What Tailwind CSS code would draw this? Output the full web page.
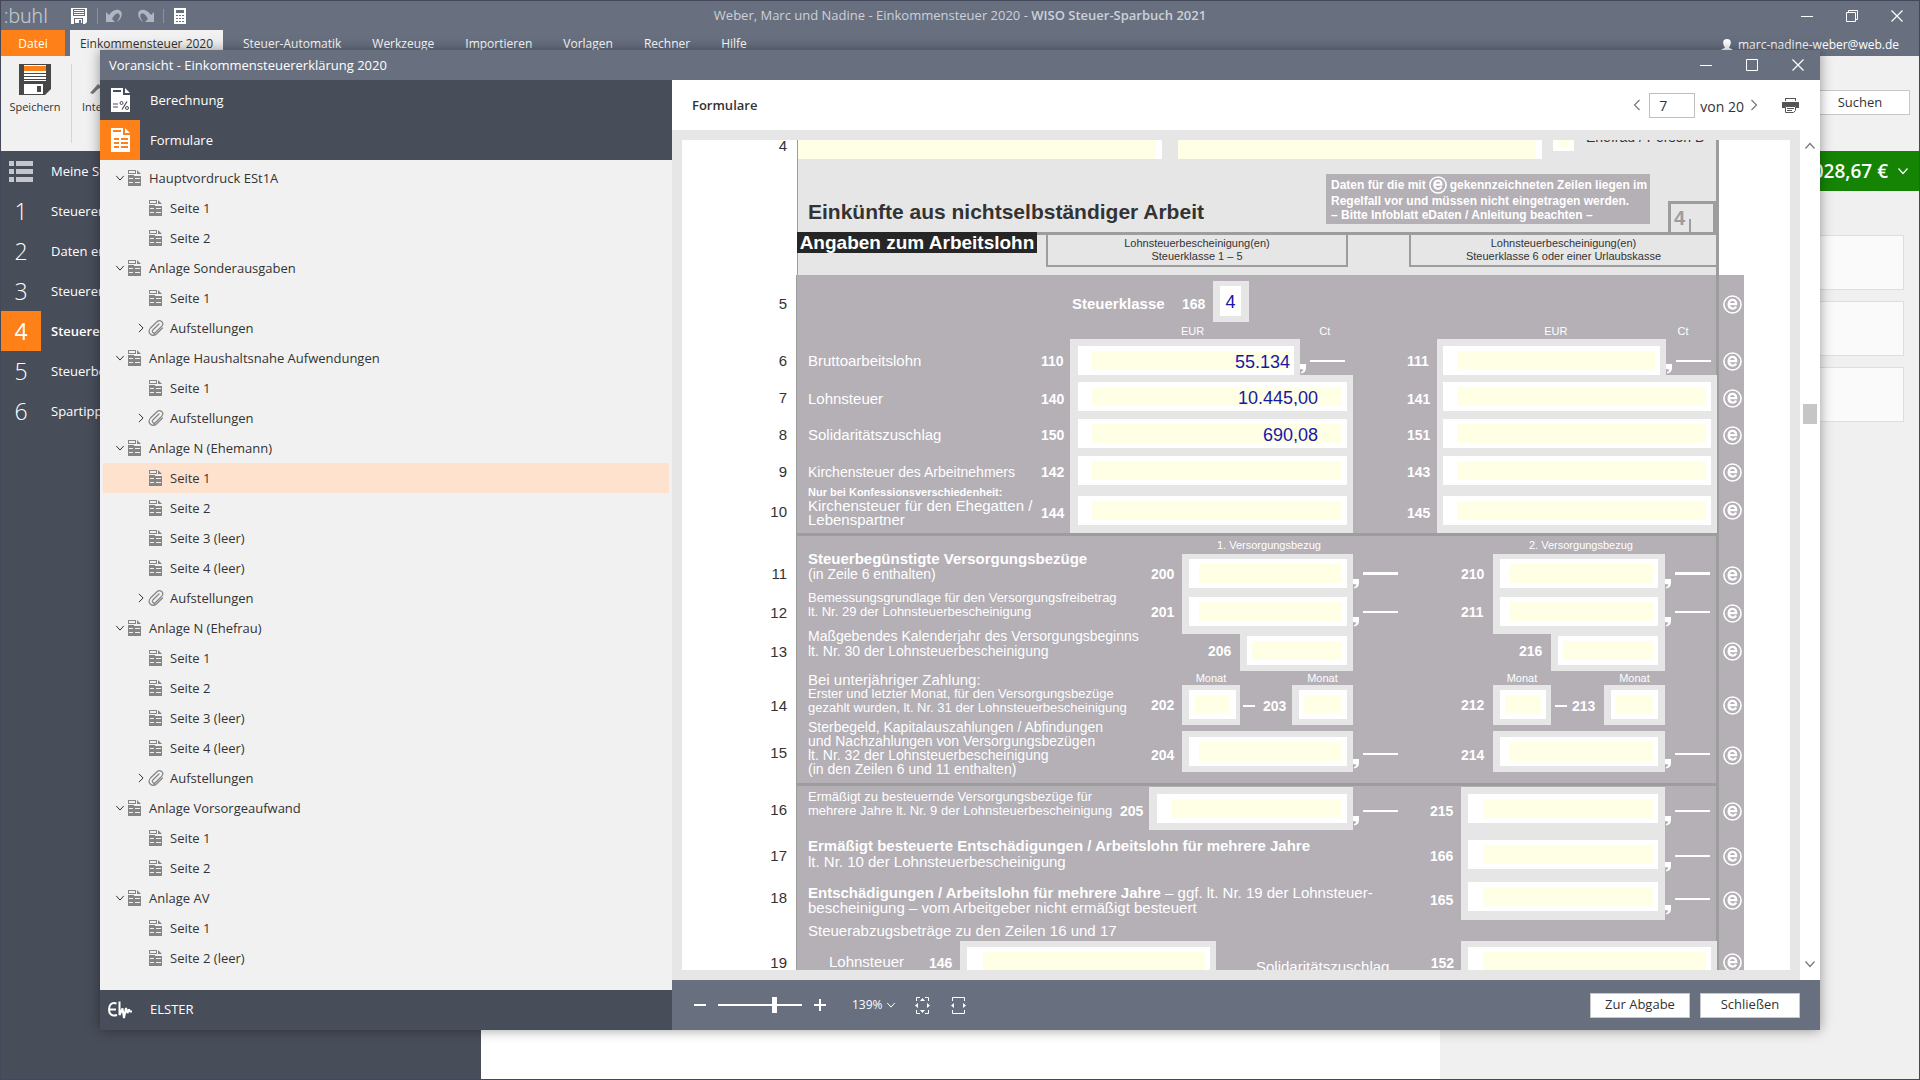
<!DOCTYPE html>
<html lang="de">
<head>
    <meta charset="UTF-8">
    <meta name="viewport" content="width=device-width, initial-scale=1.0">
    <title>WISO Steuer-Sparbuch 2021</title>
    <script src="https://cdn.jsdelivr.net/npm/@tailwindcss/browser@4"></script>
</head>
<body class="h-screen overflow-hidden relative bg-[#484d5a] font-['Open_Sans',sans-serif] text-[13px]">

    <!-- icon sprite -->
    <svg width="0" height="0" class="absolute" aria-hidden="true">
        <symbol id="i-doc" viewBox="0 0 13 16">
            <path fill="currentColor" d="M0 0h8v4H0zM9 0l4 4H9zM0 5h13v11H0z"/>
            <path fill="#f1f1f1" d="M1 1h6v2H1zM6 5h7v1H6zM1 8h4v1H1zM7 8h5v1H7zM1 12h4v1H1zM7 12h5v1H7z"/>
        </symbol>
        <symbol id="i-clip" viewBox="0 0 16 16">
            <path fill="none" stroke="currentColor" stroke-width="1.200" stroke-linecap="round" d="M14.500 8L8.500 14C4.500 17.500-1.500 13 2.500 8L9 1.800c3-2.800 7.500.7 5 4L7.800 12.300c-2 1.700-4.600-.3-3-2.300L11 4M6 14L12.500 7.500"/>
        </symbol>
        <symbol id="i-down" viewBox="0 0 12 12"><path fill="none" stroke="currentColor" stroke-width="1.200" d="M1.500 3.500L6 8.500l4.500-5"/></symbol>
        <symbol id="i-up" viewBox="0 0 12 12"><path fill="none" stroke="currentColor" stroke-width="1.200" d="M1.500 8.500L6 3.500l4.500 5"/></symbol>
        <symbol id="i-right" viewBox="0 0 12 12"><path fill="none" stroke="currentColor" stroke-width="1.200" d="M3.500 1L8.500 6l-5 5"/></symbol>
        <symbol id="i-left" viewBox="0 0 12 12"><path fill="none" stroke="currentColor" stroke-width="1.200" d="M8.500 1L3.500 6l5 5"/></symbol>
        <symbol id="i-close" viewBox="0 0 12 12"><path fill="none" stroke="currentColor" stroke-width="1.200" d="M.5.5l11 11M11.500.5l-11 11"/></symbol>
        <symbol id="i-min" viewBox="0 0 12 12"><path fill="currentColor" d="M0 6h12v1H0z"/></symbol>
        <symbol id="i-e" viewBox="0 0 20 20">
            <circle cx="10" cy="10" r="9" fill="none" stroke="#fff" stroke-width="1.700"/>
            <path fill="none" stroke="#fff" stroke-width="2.400" d="M6 9.600h7.900c0-6-7.700-6-8 .2 0 5.400 6.200 5.600 7.900 2.200"/>
        </symbol>
        <symbol id="i-comma" viewBox="0 0 6 10"><path fill="#fff" d="M0 0h6v4c0 3-1.500 5-5 5.500V8c1.500-.3 2.200-1.200 2.300-2.500L0 5z"/></symbol>
    </svg>

    <!-- main window -->
    <div class="h-full flex flex-col border border-[#43485a]">
        <header class="bg-[#687080] text-white shrink-0">
            <div class="h-[29px] flex items-center relative">
                <span class="w-[70px] pl-[3px] font-['Roboto'] font-light text-[21px] leading-[28px] text-[#c4c8d0]">:buhl</span>
                <button aria-label="Speichern" class="w-[27px] border-r border-[#8a90a0]">
                    <svg width="16" height="16" viewBox="0 0 16 16"><path fill="#fff" d="M0 0h16v14l-2 2H0z"/><path fill="#687080" d="M2 1h12v7H2zM3 10h9v6H3z"/><path fill="#fff" d="M3 2h10v1H3zM3 4h10v1H3zM3 6h10v1H3zM4 11h7v4H4z"/><path fill="#687080" d="M8 12h2v3H8z"/></svg>
                </button>
                <button aria-label="Rückgängig" class="w-[32px] pl-2"><svg width="16" height="14" viewBox="0 0 16 14"><path fill="#b0b5c2" d="M0 3v10h9L6 10c2-4 5-7 7-5 2 1.500 0 5-2 8 4-3 5.500-7 4.500-9.500C14-1 7 0 3 6z"/></svg></button>
                <button aria-label="Wiederholen" class="w-[34px] pl-2 border-r border-[#8a90a0]"><svg width="16" height="14" viewBox="0 0 16 14"><path fill="#b0b5c2" d="M16 3v10H7l3-3C8 6 5 3 3 5c-2 1.500 0 5 2 8C1 10-.5 6 .5 3.500 2-1 9 0 13 6z"/></svg></button>
                <button aria-label="Taschenrechner" class="pl-[10px]"><svg width="12" height="16" viewBox="0 0 12 16"><path fill="#fff" d="M0 0h12v16H0z"/><path fill="#687080" d="M2 2h8v3H2zM2 7h2v1H2zM5 7h2v1H5zM8 7h2v1H8zM2 10h2v1H2zM5 10h2v1H5zM8 10h2v1H8zM2 13h2v1H2zM5 13h2v1H5zM8 13h2v1H8z"/></svg></button>
                <h1 class="absolute inset-x-0 top-[4px] text-center text-[13px] leading-5 text-[#cdd1d9] pointer-events-none">Weber, Marc und Nadine - Einkommensteuer 2020 - <span class="font-semibold">WISO Steuer-Sparbuch 2021</span></h1>
                <div class="ml-auto pr-4 flex gap-[33px]">
                    <button aria-label="Minimieren"><svg width="12" height="12"><use href="#i-min"/></svg></button>
                    <button aria-label="Wiederherstellen"><svg width="12" height="12" viewBox="0 0 12 12"><path fill="none" stroke="#fff" d="M.5 2.500h9v9h-9zM2.500 2.500v-2h9v9h-2"/></svg></button>
                    <button aria-label="Schließen"><svg width="12" height="12"><use href="#i-close"/></svg></button>
                </div>
            </div>
            <nav class="h-[26px] flex items-center text-[12px] leading-[24px]">
                <button class="w-[64px] h-full pt-[2px] bg-[#fd8019]">Datei</button>
                <button class="w-[153px] h-full pt-[2px] ml-[5px] mr-5 bg-[#f1f1f1] text-[#333]">Einkommensteuer 2020</button>
                <div class="flex gap-[31px] pt-[2px]">
                    <button>Steuer-Automatik</button>
                    <button>Werkzeuge</button>
                    <button>Importieren</button>
                    <button>Vorlagen</button>
                    <button>Rechner</button>
                    <button>Hilfe</button>
                </div>
                <a href="#" class="ml-auto pr-5 pt-[3px] flex items-center gap-[5px]"><svg width="12" height="12" viewBox="0 0 12 12"><path fill="#fff" d="M6 0c5 0 4.500 5 2 8.500C9 10 12 9.500 12 12H0c0-2.500 3-2 4-3.500C1.500 5 1 0 6 0z"/></svg>marc-nadine-weber@web.de</a>
            </nav>
        </header>

        <div class="h-[95px] shrink-0 bg-[#f1f1f1] flex text-[11px] text-[#333]">
            <button class="w-[68px] pt-2 flex flex-col items-center">
                <svg width="32" height="31" viewBox="0 0 32 31"><path fill="#484848" d="M0 0h32v25l-6 6H0z"/><path fill="#fff" d="M5 1h22v16H5zM5 20h19v10H5z"/><path fill="#fd8019" d="M5 2h22v5H5z"/><path fill="#484848" d="M5 9h22v1H5zM5 12h22v1H5zM5 15h22v1H5zM18 22h4v6h-4z"/></svg>
                <span class="mt-1">Speichern</span>
            </button>
            <div class="w-px my-2 ml-[2px] bg-[#d5d5d5]"></div>
            <button class="pl-[10px] pt-2 flex flex-col items-center">
                <svg width="32" height="31" viewBox="0 0 32 31"><path fill="#777" d="M0 29l8-9 4 3-4 2-5 5zM10 14l10-12 9 7-13 13z"/></svg>
                <span class="mt-1">Interview</span>
            </button>
            <button class="ml-auto mr-[9px] mt-[34px] w-[100px] h-[25px] bg-white border border-[#c8c8c8] text-[13px]">Suchen</button>
        </div>

        <div class="flex-1 flex min-h-0">
            <nav class="w-[480px] shrink-0 text-white leading-10">
                <a href="#" class="h-10 flex"><span class="w-10 flex items-center pl-2"><svg width="24" height="21" viewBox="0 0 24 21"><path fill="#c4c6ca" d="M0 0h5v5H0zM7 0h17v5H7zM0 8h5v5H0zM7 8h17v5H7zM0 16h5v5H0zM7 16h17v5H7z"/></svg></span><span class="pl-[10px]">Meine Steuererklärung</span></a>
                <a href="#" class="h-10 flex"><span class="w-10 text-center text-[23px] font-light">1</span><span class="pl-[10px]">Steuererklärung einrichten</span></a>
                <a href="#" class="h-10 flex"><span class="w-10 text-center text-[23px] font-light">2</span><span class="pl-[10px]">Daten erfassen</span></a>
                <a href="#" class="h-10 flex"><span class="w-10 text-center text-[23px] font-light">3</span><span class="pl-[10px]">Steuererklärung prüfen</span></a>
                <a href="#" class="h-10 flex font-semibold"><span class="w-10 text-center text-[23px] font-normal bg-[#fd8019]">4</span><span class="pl-[10px]">Steuererklärung abgeben</span></a>
                <a href="#" class="h-10 flex"><span class="w-10 text-center text-[23px] font-light">5</span><span class="pl-[10px]">Steuerbescheid prüfen</span></a>
                <a href="#" class="h-10 flex"><span class="w-10 text-center text-[23px] font-light">6</span><span class="pl-[10px]">Spartipps</span></a>
            </nav>
            <main class="flex-1 bg-white"></main>
            <aside class="w-[479px] shrink-0 bg-[#f0f0f0]">
                <div class="h-10 bg-[#158405] text-white flex items-center justify-end pr-[10px] gap-[9px] text-[19px] font-semibold">1.028,67 €<svg width="12" height="12"><use href="#i-down"/></svg></div>
                <div class="mt-11 mx-[15px] flex flex-col gap-[11px]">
                    <div class="h-[55px] bg-[#fafafa] border border-[#dedede]"></div>
                    <div class="h-[55px] bg-[#fafafa] border border-[#dedede]"></div>
                    <div class="h-[55px] bg-[#fafafa] border border-[#dedede]"></div>
                </div>
            </aside>
        </div>
    </div>

    <!-- preview window -->
    <section class="absolute inset-x-[100px] inset-y-[50px] flex flex-col shadow-[0_0_12px_rgba(0,0,0,0.4)]">
        <div class="h-[30px] shrink-0 bg-[#687080] text-white flex items-center justify-between pl-[9px] pr-4">
            <h2 class="pt-px">Voransicht - Einkommensteuererklärung 2020</h2>
            <div class="flex gap-[34px]">
                <button aria-label="Minimieren"><svg width="12" height="12"><use href="#i-min"/></svg></button>
                <button aria-label="Maximieren"><svg width="12" height="12" viewBox="0 0 12 12"><path fill="none" stroke="#fff" d="M.5.5h11v11H.5z"/></svg></button>
                <button aria-label="Schließen"><svg width="12" height="12"><use href="#i-close"/></svg></button>
            </div>
        </div>

        <div class="flex-1 flex min-h-0">
            <div class="w-[572px] shrink-0 flex flex-col">
                <nav class="bg-[#484d5a] text-white leading-10">
                    <a href="#" class="h-10 flex"><span class="w-10 flex items-center justify-center"><svg width="19" height="24" viewBox="0 0 19 24"><path fill="#fff" d="M0 0h12v7h7v17H0zM14 0l5 5h-5z"/><path fill="#484d5a" d="M2 2h8v2H2z"/><path fill="none" stroke="#484d5a" stroke-width="1.200" d="M2 16h5M2 19h5M16 13.500l-5 8"/><circle cx="10.500" cy="15" r="1.500" fill="none" stroke="#484d5a"/><circle cx="16" cy="20" r="1.500" fill="none" stroke="#484d5a"/></svg></span><span class="pl-[10px]">Berechnung</span></a>
                    <a href="#" class="h-10 flex"><span class="w-10 flex items-center justify-center bg-[#fd8019]"><svg width="19" height="24" viewBox="0 0 19 24"><path fill="#fff" d="M0 0h12v7h7v17H0zM14 0l5 5h-5z"/><path fill="#fd8019" d="M2 2h8v2H2zM3 10h5v2H3zM10 10h7v2h-7zM3 14h5v2H3zM10 14h7v2h-7zM3 18h5v2H3zM10 18h7v2h-7z"/></svg></span><span class="pl-[10px]">Formulare</span></a>
                </nav>
                <ul id="tree" class="flex-1 min-h-0 overflow-hidden bg-[#f1f1f1] p-[3px] text-[#333]"></ul>
                <a href="#" class="h-10 shrink-0 bg-[#484d5a] text-white flex items-center">
                    <svg class="ml-2 mr-[18px]" width="24" height="18" viewBox="0 0 24 18"><path fill="none" stroke="#fff" stroke-width="2" stroke-linejoin="bevel" d="M8.500 2.500C3 .5 1 5 1 8.500s2 7.500 8 5.500M1 8.500h7M11.500.5V14l3-6.500L16 17l2-10 1.500 5L21 8.500l1 2h2"/></svg>ELSTER
                </a>
            </div>

            <div class="flex-1 min-w-0 flex flex-col">
                <div class="h-[50px] shrink-0 bg-white text-[#333] flex items-center pl-5 pr-[21px]">
                    <h3 class="font-semibold pt-px">Formulare</h3>
                    <button aria-label="Vorherige Seite" class="ml-auto mr-[6px] text-[#777]"><svg width="12" height="14"><use href="#i-left"/></svg></button>
                    <input aria-label="Seite" value="7" class="w-[46px] h-[25px] border border-[#c0c0c0] pl-[9px] mr-[5px] text-[14px]">
                    <span class="pt-[2px] text-[14px]">von 20</span>
                    <button aria-label="Nächste Seite" class="ml-1 mr-[22px] text-[#777]"><svg width="12" height="14"><use href="#i-right"/></svg></button>
                    <button aria-label="Drucken"><svg width="17" height="15" viewBox="0 0 17 15"><path fill="#555" d="M3 0h11v3H3zM0 4h17v6h-3V8H3v2H0z"/><path fill="#fff" d="M4 1h9v2H4z"/><path fill="#fff" stroke="#555" d="M3.500 8.500h10v4l-2 2h-8z"/><path fill="#555" d="M5 10h7v1H5zM5 12h5v1H5z"/></svg></button>
                </div>

                <div class="flex-1 min-h-0 flex">
                    <div class="flex-1 min-w-0 p-[10px] bg-[#e6e6e6]">
                        <form class="h-full bg-white overflow-hidden font-['Liberation_Sans',sans-serif] text-[14px] leading-[14px] text-[#333]">
                            <div class="w-[1062px]">

                                <!-- page head -->
                                <div class="flex">
                                    <div class="w-[115px] pr-[10px] text-right text-[15px] leading-[12px]">4</div>
                                    <div class="w-[922px] h-[135px] bg-[#e6e6e6] border-l border-r-3 border-[#9d9d9d] flex flex-col">
                                        <div class="flex h-[19px] items-start">
                                            <input aria-label="Vorname" class="w-[364px] h-[19px] bg-[#ffffe5] border-white border-r-6">
                                            <input aria-label="Name" class="w-[364px] h-[19px] ml-4 bg-[#ffffe5] border-white border-r-6">
                                            <input aria-label="Person B" class="w-[21px] h-[11px] ml-[11px] bg-[#ffffe5] border-white border-x-5 border-b-4">
                                            <span class="ml-3 h-[5px] flex items-end leading-[16px]">Ehefrau / Person B</span>
                                        </div>
                                        <div class="flex h-[76px] border-b-3 border-[#9d9d9d]">
                                            <h4 class="pl-[10px] pt-[41px] text-[21px] leading-[24px] font-bold">Einkünfte aus nichtselbständiger Arbeit</h4>
                                            <p class="ml-auto mt-[15px] mr-[18px] w-[324px] h-[50px] bg-[#b4b0b6] text-white font-bold text-[12px] leading-[14px] pl-[5px] pt-[1px] whitespace-nowrap">
                                                <span class="flex items-center gap-[3px] h-[19px]">Daten für die mit <svg width="18" height="18"><use href="#i-e"/></svg> gekennzeichneten Zeilen liegen im</span>
                                                Regelfall vor und müssen nicht eingetragen werden.<br>– Bitte Infoblatt eDaten / Anleitung beachten –
                                            </p>
                                            <div class="mt-[42px] w-[48px] border-3 border-b-0 border-[#9d9d9d] text-[#9d9d9d] font-bold text-[20px] leading-[27px] pl-[3px] flex items-end">4<i class="w-[2px] h-[13px] ml-1 bg-[#9d9d9d]"></i></div>
                                        </div>
                                        <div class="flex text-[11px] leading-[13px] text-center">
                                            <h5 class="w-[240px] h-[21px] -mt-[3px] -ml-px bg-[#262626] text-white font-bold text-[19px] leading-[21px]">Angaben zum Arbeitslohn</h5>
                                            <p class="w-[302px] h-[32px] ml-[9px] pt-[2px] border-2 border-t-0 border-[#9d9d9d]">Lohnsteuerbescheinigung(en)<br>Steuerklasse 1 – 5</p>
                                            <p class="ml-auto w-[307px] h-[32px] pt-[2px] border-l-2 border-b-2 border-[#9d9d9d]">Lohnsteuerbescheinigung(en)<br>Steuerklasse 6 oder einer Urlaubskasse</p>
                                        </div>
                                    </div>
                                </div>

                                <div class="flex">
                                    <!-- line numbers -->
                                    <ol class="w-[114px] pr-[9px] text-right text-[15px]">
                                        <li class="h-[58px] leading-[58px]">5</li>
                                        <li class="h-[56px] leading-[56px]">6</li>
                                        <li class="h-[18px] leading-[18px]">7</li>
                                        <li class="h-[56px] leading-[56px]">8</li>
                                        <li class="h-[18px] leading-[18px]">9</li>
                                        <li class="h-[62px] leading-[62px]">10</li>
                                        <li class="h-[62px] leading-[62px]">11</li>
                                        <li class="h-[16px] leading-[16px]">12</li>
                                        <li class="h-[62px] leading-[62px]">13</li>
                                        <li class="h-[46px] leading-[46px]">14</li>
                                        <li class="h-[48px] leading-[48px]">15</li>
                                        <li class="h-[66px] leading-[66px]">16</li>
                                        <li class="h-[26px] leading-[26px]">17</li>
                                        <li class="h-[58px] leading-[58px]">18</li>
                                        <li class="h-[72px] leading-[72px]">19</li>
                                    </ol>

                                    <div class="w-[923px] bg-[#b4b0b6] border-l border-r-3 border-[#9d9d9d] text-white">
                                        <!-- lines 5 to 10 -->
                                        <div class="flex h-[51px] pt-[6px] font-bold leading-[46px]">
                                            <label for="f168" class="ml-[275px] w-[110px] text-[15px]">Steuerklasse</label><span class="w-[31px]">168</span>
                                            <div class="w-[36px] h-[41px] bg-[#e6e6e6] pt-[5px] pl-[7px]"><input id="f168" value="4" class="block w-[21px] h-[30px] pt-[2px] bg-white text-center text-[18px] font-normal text-[#1818a8]"></div>
                                        </div>
                                        <div class="flex h-[13px] text-[11px] leading-[10px]"><span class="ml-[384px]">EUR</span><span class="ml-[115px]">Ct</span><span class="ml-[214px]">EUR</span><span class="ml-[110px]">Ct</span></div>
                                        <div class="grid grid-rows-[100%] grid-cols-[233px_40px_230px_53px_84px_229px_51px] h-[36px] leading-[44px]">
                                            <label for="f110" class="pl-[11px] text-[15px]">Bruttoarbeitslohn</label><b class="pl-[11px]">110</b>
                                            <div class="bg-[#e6e6e6] pt-[7px] pl-2 pr-[6px]"><input id="f110" value="55.134" class="block w-full h-[29px] pt-[2px] bg-[#ffffe5] border-5 border-l-14 border-r-4 border-white text-right text-[18px] text-[#1818a8]"></div>
                                            <div class="flex items-start gap-[4px]"><svg class="mt-[25px]" width="6" height="10"><use href="#i-comma"/></svg><i class="w-[35px] h-[2px] mt-[21px] bg-white"></i></div>
                                            <b class="pl-[54px]">111</b>
                                            <div class="bg-[#e6e6e6] pt-[7px] px-[6px]"><input aria-label="111" class="block w-full h-[29px] bg-[#ffffe5] border-5 border-l-14 border-white"></div>
                                            <div class="flex items-start gap-[4px]"><svg class="mt-[25px]" width="6" height="10"><use href="#i-comma"/></svg><i class="w-[35px] h-[2px] mt-[21px] bg-white"></i></div>
                                        </div>
                                        <div class="grid grid-rows-[100%] grid-cols-[233px_40px_283px_84px_280px] h-[37px] leading-[48px]">
                                            <label for="f140" class="pl-[11px] text-[15px]">Lohnsteuer</label><b class="pl-[11px]">140</b>
                                            <div class="bg-[#e6e6e6] pt-[7px] pl-2 pr-[6px]"><input id="f140" value="10.445,00" class="block w-full h-[29px] pt-[2px] bg-[#ffffe5] border-5 border-l-14 border-white pr-6 text-right text-[18px] text-[#1818a8]"></div>
                                            <b class="pl-[54px]">141</b>
                                            <div class="bg-[#e6e6e6] pt-[7px] px-[6px]"><input aria-label="141" class="block w-full h-[29px] bg-[#ffffe5] border-5 border-l-14 border-white"></div>
                                        </div>
                                        <div class="grid grid-rows-[100%] grid-cols-[233px_40px_283px_84px_280px] h-[37px] leading-[46px]">
                                            <label for="f150" class="pl-[11px] text-[15px]">Solidaritätszuschlag</label><b class="pl-[11px]">150</b>
                                            <div class="bg-[#e6e6e6] pt-[7px] pl-2 pr-[6px]"><input id="f150" value="690,08" class="block w-full h-[29px] pt-[2px] bg-[#ffffe5] border-5 border-l-14 border-white pr-6 text-right text-[18px] text-[#1818a8]"></div>
                                            <b class="pl-[54px]">151</b>
                                            <div class="bg-[#e6e6e6] pt-[7px] px-[6px]"><input aria-label="151" class="block w-full h-[29px] bg-[#ffffe5] border-5 border-l-14 border-white"></div>
                                        </div>
                                        <div class="grid grid-rows-[100%] grid-cols-[233px_40px_283px_84px_280px] h-[37px] leading-[46px]">
                                            <label for="f142" class="pl-[11px]">Kirchensteuer des Arbeitnehmers</label><b class="pl-[11px]">142</b>
                                            <div class="bg-[#e6e6e6] pt-[7px] pl-2 pr-[6px]"><input id="f142" class="block w-full h-[29px] bg-[#ffffe5] border-5 border-l-14 border-white"></div>
                                            <b class="pl-[54px]">143</b>
                                            <div class="bg-[#e6e6e6] pt-[7px] px-[6px]"><input aria-label="143" class="block w-full h-[29px] bg-[#ffffe5] border-5 border-l-14 border-white"></div>
                                        </div>
                                        <div class="grid grid-rows-[100%] grid-cols-[233px_40px_283px_84px_280px] h-[47px]">
                                            <label for="f144" class="pl-[11px] whitespace-nowrap text-[15px]"><b class="block text-[11px] leading-[13px]">Nur bei Konfessionsverschiedenheit:</b>Kirchensteuer für den Ehegatten /<br>Lebenspartner</label><b class="pl-[11px] leading-[54px]">144</b>
                                            <div class="bg-[#e6e6e6] pt-[10px] pl-2 pr-[6px]"><input id="f144" class="block w-full h-[29px] bg-[#ffffe5] border-5 border-l-14 border-white"></div>
                                            <b class="pl-[54px] leading-[54px]">145</b>
                                            <div class="bg-[#e6e6e6] pt-[10px] px-[6px]"><input aria-label="145" class="block w-full h-[29px] bg-[#ffffe5] border-5 border-l-14 border-white"></div>
                                        </div>

                                        <!-- lines 11 to 15 -->
                                        <div class="flex h-[21px] border-t-3 border-[#9d9d9d] text-[11px] leading-[18px]"><span class="ml-[420px] w-[312px]">1. Versorgungsbezug</span><span>2. Versorgungsbezug</span></div>
                                        <div class="grid grid-rows-[100%] grid-cols-[343px_42px_171px_53px_87px_172px_52px] h-[38px]">
                                            <label for="f200" class="pl-[11px] -mt-[3px] leading-[15px]"><b class="text-[15px]">Steuerbegünstigte Versorgungsbezüge</b><br>(in Zeile 6 enthalten)</label><b class="pl-[11px] leading-[40px]">200</b>
                                            <div class="bg-[#e6e6e6] pt-[5px] pl-[7px] pr-[6px]"><input id="f200" class="block w-full h-[29px] bg-[#ffffe5] border-5 border-l-10 border-white"></div>
                                            <div class="flex items-start gap-[4px]"><svg class="mt-[25px]" width="6" height="10"><use href="#i-comma"/></svg><i class="w-[35px] h-[3px] mt-[18px] bg-white"></i></div>
                                            <b class="pl-[55px] leading-[40px]">210</b>
                                            <div class="bg-[#e6e6e6] pt-[5px] px-[7px]"><input aria-label="210" class="block w-full h-[29px] bg-[#ffffe5] border-5 border-l-10 border-white"></div>
                                            <div class="flex items-start gap-[4px]"><svg class="mt-[25px]" width="6" height="10"><use href="#i-comma"/></svg><i class="w-[35px] h-[3px] mt-[18px] bg-white"></i></div>
                                        </div>
                                        <div class="grid grid-rows-[100%] grid-cols-[343px_42px_171px_53px_87px_172px_52px] h-[42px]">
                                            <label for="f201" class="pl-[11px] text-[13px] leading-[14px] -mt-px">Bemessungsgrundlage für den Versorgungsfreibetrag<br>lt. Nr. 29 der Lohnsteuerbescheinigung</label><b class="pl-[11px] leading-[40px]">201</b>
                                            <div class="bg-[#e6e6e6] pt-[5px] pl-[7px] pr-[6px]"><input id="f201" class="block w-full h-[29px] bg-[#ffffe5] border-5 border-l-10 border-white"></div>
                                            <div class="flex items-start gap-[4px]"><svg class="mt-[25px]" width="6" height="10"><use href="#i-comma"/></svg><i class="w-[35px] h-[2px] mt-[19px] bg-white"></i></div>
                                            <b class="pl-[55px] leading-[40px]">211</b>
                                            <div class="bg-[#e6e6e6] pt-[5px] px-[7px]"><input aria-label="211" class="block w-full h-[29px] bg-[#ffffe5] border-5 border-l-10 border-white"></div>
                                            <div class="flex items-start gap-[4px]"><svg class="mt-[25px]" width="6" height="10"><use href="#i-comma"/></svg><i class="w-[35px] h-[2px] mt-[19px] bg-white"></i></div>
                                        </div>
                                        <div class="grid grid-rows-[100%] grid-cols-[400px_43px_113px_140px_58px_114px] h-[37px]">
                                            <label for="f206" class="pl-[11px] leading-[15px] -mt-[5px]">Maßgebendes Kalenderjahr des Versorgungsbeginns<br>lt. Nr. 30 der Lohnsteuerbescheinigung</label><b class="pl-[11px] leading-[34px]">206</b>
                                            <div class="bg-[#e6e6e6] pt-[2px] pl-[7px] pr-[6px]"><input id="f206" class="block w-full h-[29px] bg-[#ffffe5] border-5 border-white"></div>
                                            <span></span><b class="pl-[26px] leading-[34px]">216</b>
                                            <div class="bg-[#e6e6e6] pt-[2px] px-[7px]"><input aria-label="216" class="block w-full h-[29px] bg-[#ffffe5] border-5 border-white"></div>
                                        </div>
                                        <div class="grid grid-rows-[100%] grid-cols-[343px_42px_58px_52px_61px_140px_58px_53px_61px] h-[49px]">
                                            <label for="f202" class="pl-[11px] pt-[2px] whitespace-nowrap text-[15px]">Bei unterjähriger Zahlung:<span class="block text-[13px]">Erster und letzter Monat, für den Versorgungsbezüge<br>gezahlt wurden, lt. Nr. 31 der Lohnsteuerbescheinigung</span></label><b class="pl-[11px] leading-[68px]">202</b>
                                            <div class="text-[11px] text-center">Monat<div class="h-[40px] bg-[#e6e6e6] pt-[5px] pl-[7px] pr-[4px]"><input id="f202" class="block w-full h-[29px] bg-[#ffffe5] border-5 border-r-6 border-white"></div></div>
                                            <b class="pl-[3px] pt-5 flex items-center gap-2"><i class="w-[12px] h-[2px] bg-white"></i>203</b>
                                            <div class="text-[11px] text-center">Monat<div class="h-[40px] bg-[#e6e6e6] pt-[5px] pl-[7px] pr-[6px]"><input aria-label="203" class="block w-full h-[29px] bg-[#ffffe5] border-5 border-white"></div></div>
                                            <b class="pl-[108px] leading-[68px]">212</b>
                                            <div class="text-[11px] text-center">Monat<div class="h-[40px] bg-[#e6e6e6] pt-[5px] pl-[7px] pr-[5px]"><input aria-label="212" class="block w-full h-[29px] bg-[#ffffe5] border-5 border-white"></div></div>
                                            <b class="pl-[4px] pt-5 flex items-center gap-[5px]"><i class="w-[12px] h-[2px] bg-white"></i>213</b>
                                            <div class="text-[11px] text-center">Monat<div class="h-[40px] bg-[#e6e6e6] pt-[5px] px-[7px]"><input aria-label="213" class="block w-full h-[29px] bg-[#ffffe5] border-5 border-white"></div></div>
                                        </div>
                                        <div class="grid grid-rows-[100%] grid-cols-[343px_42px_171px_53px_87px_172px_52px] h-[63px]">
                                            <label for="f204" class="pl-[11px]">Sterbegeld, Kapitalauszahlungen / Abfindungen<br>und Nachzahlungen von Versorgungsbezügen<br>lt. Nr. 32 der Lohnsteuerbescheinigung<br>(in den Zeilen 6 und 11 enthalten)</label><b class="pl-[11px] leading-[70px]">204</b>
                                            <div class="h-[41px] mt-[11px] bg-[#e6e6e6] pt-[6px] pl-[7px] pr-[6px]"><input id="f204" class="block w-full h-[29px] bg-[#ffffe5] border-5 border-l-10 border-white"></div>
                                            <div class="flex items-start gap-[4px]"><svg class="mt-[39px]" width="6" height="10"><use href="#i-comma"/></svg><i class="w-[35px] h-[2px] mt-[33px] bg-white"></i></div>
                                            <b class="pl-[55px] leading-[70px]">214</b>
                                            <div class="h-[41px] mt-[11px] bg-[#e6e6e6] pt-[6px] px-[7px]"><input aria-label="214" class="block w-full h-[29px] bg-[#ffffe5] border-5 border-l-10 border-white"></div>
                                            <div class="flex items-start gap-[4px]"><svg class="mt-[39px]" width="6" height="10"><use href="#i-comma"/></svg><i class="w-[35px] h-[2px] mt-[33px] bg-white"></i></div>
                                        </div>

                                        <!-- lines 16 to 19 -->
                                        <div class="grid grid-rows-[100%] grid-cols-[312px_40px_204px_53px_55px_204px_52px] h-[48px] border-t-3 border-[#9d9d9d] pt-px">
                                            <label for="f205" class="pl-[11px] pt-[3px] text-[13px] leading-[14px] whitespace-nowrap">Ermäßigt zu besteuernde Versorgungsbezüge für<br>mehrere Jahre lt. Nr. 9 der Lohnsteuerbescheinigung</label><b class="pl-[11px] leading-[48px]">205</b>
                                            <div class="h-[43px] bg-[#e6e6e6] pt-[7px] pl-2 pr-[6px]"><input id="f205" class="block w-full h-[29px] bg-[#ffffe5] border-5 border-l-15 border-white"></div>
                                            <div class="flex items-start gap-[4px]"><svg class="mt-[29px]" width="6" height="10"><use href="#i-comma"/></svg><i class="w-[35px] h-[2px] mt-[23px] bg-white"></i></div>
                                            <b class="pl-[24px] leading-[48px]">215</b>
                                            <div class="bg-[#e6e6e6] pt-[7px] px-[7px]"><input aria-label="215" class="block w-full h-[29px] bg-[#ffffe5] border-5 border-l-15 border-white"></div>
                                            <div class="flex items-start gap-[4px]"><svg class="mt-[29px]" width="6" height="10"><use href="#i-comma"/></svg><i class="w-[35px] h-[2px] mt-[23px] bg-white"></i></div>
                                        </div>
                                        <div class="grid grid-rows-[100%] grid-cols-[609px_55px_204px_52px] h-[44px] text-[15px]">
                                            <label for="f166" class="pl-[11px] pt-[7px] leading-[16px]"><b>Ermäßigt besteuerte Entschädigungen / Arbeitslohn für mehrere Jahre</b><br>lt. Nr. 10 der Lohnsteuerbescheinigung</label>
                                            <b class="pl-[24px] leading-[50px] text-[14px]">166</b>
                                            <div class="bg-[#e6e6e6] pt-[9px] px-[7px]"><input id="f166" class="block w-full h-[29px] bg-[#ffffe5] border-5 border-l-15 border-white"></div>
                                            <div class="flex items-start gap-[4px]"><svg class="mt-[31px]" width="6" height="10"><use href="#i-comma"/></svg><i class="w-[35px] h-[2px] mt-[24px] bg-white"></i></div>
                                        </div>
                                        <div class="grid grid-rows-[100%] grid-cols-[609px_55px_204px_52px] h-[45px] text-[15px]">
                                            <label for="f165" class="pl-[11px] pt-[10px] leading-[15px]"><b>Entschädigungen / Arbeitslohn für mehrere Jahre</b> – ggf. lt. Nr. 19 der Lohnsteuer-<br>bescheinigung – vom Arbeitgeber nicht ermäßigt besteuert</label>
                                            <b class="pl-[24px] leading-[50px] text-[14px]">165</b>
                                            <div class="bg-[#e6e6e6] pt-[7px] px-[7px]"><input id="f165" class="block w-full h-[29px] bg-[#ffffe5] border-5 border-l-15 border-white"></div>
                                            <div class="flex items-start gap-[4px]"><svg class="mt-[30px]" width="6" height="10"><use href="#i-comma"/></svg><i class="w-[35px] h-[2px] mt-[23px] bg-white"></i></div>
                                        </div>
                                        <p class="h-[21px] pl-[11px] leading-[22px] text-[15px]">Steuerabzugsbeträge zu den Zeilen 16 und 17</p>
                                        <div class="grid grid-cols-[121px_42px_256px_245px_256px] h-[48px] text-[15px]">
                                            <label for="f146" class="pl-8 leading-[42px]">Lohnsteuer</label><b class="pl-[11px] leading-[44px] text-[14px]">146</b>
                                            <div class="bg-[#e6e6e6] pt-[6px] pl-[7px] pr-[6px]"><input id="f146" class="block w-full h-[29px] bg-[#ffffe5] border-5 border-l-16 border-white"></div>
                                            <div class="flex justify-between pl-10 pr-[7px]"><label for="f152" class="leading-[52px]">Solidaritätszuschlag</label><b class="leading-[44px] text-[14px]">152</b></div>
                                            <div class="bg-[#e6e6e6] pt-[6px] pl-[7px] pr-[6px]"><input id="f152" class="block w-full h-[29px] bg-[#ffffe5] border-5 border-l-15 border-white"></div>
                                        </div>
                                    </div>

                                    <!-- eDaten marks -->
                                    <div class="w-[25px] bg-[#b4b0b6] flex flex-col items-center pt-[20px] pl-px">
                                        <svg class="mb-[38px] shrink-0" width="19" height="19"><use href="#i-e"/></svg>
                                        <svg class="mb-[18px] shrink-0" width="19" height="19"><use href="#i-e"/></svg>
                                        <svg class="mb-[18px] shrink-0" width="19" height="19"><use href="#i-e"/></svg>
                                        <svg class="mb-[18px] shrink-0" width="19" height="19"><use href="#i-e"/></svg>
                                        <svg class="mb-[19px] shrink-0" width="19" height="19"><use href="#i-e"/></svg>
                                        <svg class="mb-[46px] shrink-0" width="19" height="19"><use href="#i-e"/></svg>
                                        <svg class="mb-[19px] shrink-0" width="19" height="19"><use href="#i-e"/></svg>
                                        <svg class="mb-[19px] shrink-0" width="19" height="19"><use href="#i-e"/></svg>
                                        <svg class="mb-[35px] shrink-0" width="19" height="19"><use href="#i-e"/></svg>
                                        <svg class="mb-[31px] shrink-0" width="19" height="19"><use href="#i-e"/></svg>
                                        <svg class="mb-[37px] shrink-0" width="19" height="19"><use href="#i-e"/></svg>
                                        <svg class="mb-[26px] shrink-0" width="19" height="19"><use href="#i-e"/></svg>
                                        <svg class="mb-[25px] shrink-0" width="19" height="19"><use href="#i-e"/></svg>
                                        <svg class="mb-[43px] shrink-0" width="19" height="19"><use href="#i-e"/></svg>
                                        <svg class="shrink-0" width="19" height="19"><use href="#i-e"/></svg>
                                    </div>
                                </div>
                            </div>
                        </form>
                    </div>
                    <div class="w-5 shrink-0 bg-white text-[#777] flex flex-col items-center py-[10px]">
                        <svg class="shrink-0" width="12" height="12"><use href="#i-up"/></svg>
                        <div class="w-[14px] h-[20px] mt-[252px] bg-[#c6c6c6]"></div>
                        <svg class="shrink-0 mt-auto" width="12" height="12"><use href="#i-down"/></svg>
                    </div>
                </div>

                <div class="h-[50px] shrink-0 bg-[#687080] text-white flex items-center pl-[22px] pr-5">
                    <button aria-label="Verkleinern"><svg width="12" height="12" viewBox="0 0 12 12"><path fill="#fff" d="M0 5h12v2H0z"/></svg></button>
                    <svg class="mx-3" width="84" height="18" viewBox="0 0 84 18" role="slider" aria-label="Zoom" aria-valuenow="139"><path fill="#fff" d="M0 8h84v2H0zM54 1h5v16h-5z"/></svg>
                    <button aria-label="Vergrößern"><svg width="12" height="12" viewBox="0 0 12 12"><path fill="#fff" d="M0 5h12v2H0zM5 0h2v12H5z"/></svg></button>
                    <button class="ml-[26px] flex items-center gap-[3px] text-[12px]">139%<svg width="10" height="10"><use href="#i-down"/></svg></button>
                    <button aria-label="Ganze Seite" class="ml-[19px]"><svg width="15" height="17" viewBox="0 0 15 17"><path fill="none" stroke="#fff" d="M1.500 4V.5H5M10 .5h3.500V4M13.500 13v3.500H10M5 16.500H1.500V13"/><path fill="#fff" d="M5 4l2.500-3L10 4zM5 13l2.500 3 2.500-3zM3 6v5L0 8.500zM12 6v5l3-2.500z"/></svg></button>
                    <button aria-label="Seitenbreite" class="ml-[21px]"><svg width="15" height="17" viewBox="0 0 15 17"><path fill="none" stroke="#fff" d="M1.500 4V.5h12V4M13.500 13v3.500h-12V13"/><path fill="#fff" d="M3 6v5L0 8.500zM12 6v5l3-2.500z"/></svg></button>
                    <div class="ml-auto flex gap-[10px] text-[#333]">
                        <button class="w-[100px] h-[25px] bg-white border border-[#c8c8c8]">Zur Abgabe</button>
                        <button class="w-[100px] h-[25px] bg-white border border-[#c8c8c8]">Schließen</button>
                    </div>
                </div>
            </div>
        </div>
    </section>

    <script>
        var forms = [
            ['Hauptvordruck ESt1A', ['Seite 1', 'Seite 2']],
            ['Anlage Sonderausgaben', ['Seite 1', 'Aufstellungen']],
            ['Anlage Haushaltsnahe Aufwendungen', ['Seite 1', 'Aufstellungen']],
            ['Anlage N (Ehemann)', ['Seite 1', 'Seite 2', 'Seite 3 (leer)', 'Seite 4 (leer)', 'Aufstellungen']],
            ['Anlage N (Ehefrau)', ['Seite 1', 'Seite 2', 'Seite 3 (leer)', 'Seite 4 (leer)', 'Aufstellungen']],
            ['Anlage Vorsorgeaufwand', ['Seite 1', 'Seite 2']],
            ['Anlage AV', ['Seite 1', 'Seite 2 (leer)']]
        ];
        var html = '';
        forms.forEach(function (form) {
            html += '<li><a href="#" class="h-[30px] flex items-center pl-3">' +
                '<svg width="10" height="10" class="mr-[3px]"><use href="#i-down"/></svg>' +
                '<svg width="13" height="16" class="mr-2 text-[#858585]"><use href="#i-doc"/></svg><span class="pt-[2px]">' + form[0] + '</span></a><ul>';
            form[1].forEach(function (page) {
                var label = '<span class="pt-[2px]">' + page + '</span></a></li>';
                if (page === 'Aufstellungen') {
                    html += '<li><a href="#" class="h-[30px] flex items-center pl-[33px]">' +
                        '<svg width="10" height="10" class="mr-[2px]"><use href="#i-right"/></svg>' +
                        '<svg width="16" height="16" class="mr-[6px] text-[#858585]"><use href="#i-clip"/></svg>' + label;
                } else {
                    var selected = form[0] === 'Anlage N (Ehemann)' && page === 'Seite 1';
                    html += '<li><a href="#" class="h-[30px] flex items-center pl-[46px] ' + (selected ? 'bg-[#ffe2ce]' : '') + '">' +
                        '<svg width="13" height="16" class="mr-2 text-[#858585]"><use href="#i-doc"/></svg>' + label;
                }
            });
            html += '</ul></li>';
        });
        document.getElementById('tree').innerHTML = html;
    </script>
</body>
</html>
